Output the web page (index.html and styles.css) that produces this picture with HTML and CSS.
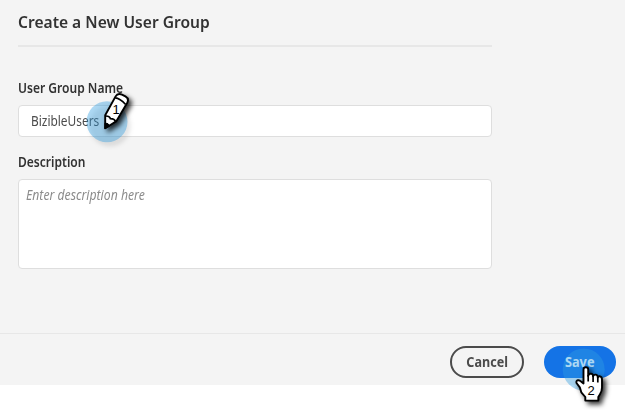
FILE: index.html
```html
<!DOCTYPE html>
<html lang="en">
<head>
<meta charset="utf-8">
<title>Create a New User Group</title>
<link rel="stylesheet" href="styles.css">
</head>
<body>
<main class="dialog">
  <form class="form">
    <h1 class="title"><span class="title-text">Create a New User Group</span></h1>
    <label class="label name-label" for="name"><span class="name-label-text">User Group Name</span></label>
    <div class="field" id="name"><span class="value">BizibleUsers</span></div>
    <label class="label desc-label" for="desc"><span class="desc-label-text">Description</span></label>
    <div class="field area" id="desc"><span class="placeholder">Enter description here</span></div>
  </form>
  <footer class="actions">
    <button class="button cancel" type="button"><span class="cancel-text">Cancel</span></button>
    <button class="button save" type="button"><span class="save-text">Save</span></button>
  </footer>
</main>
<svg class="marker pencil" width="70" height="65" viewBox="70 85 70 65">
  <circle class="halo" cx="107" cy="121.8" r="20.5"/>
  <g class="tool">
    <path class="shape" d="M105.2 128.2 L105.2 115.2 L115.6 96.4 Q117.6 92.8 122 94.6 L125.4 96.4 Q129.2 98.6 127.4 102.4 L116.2 121.4 Z"/>
    <path class="line" d="M115.2 97.8 Q120 98.2 125.4 104.2 M105.4 116 Q109.5 115.8 110.4 118.6 Q114.5 118.5 115.6 121.6"/>
    <path class="lead" d="M104.8 128.8 L105 123 Q108.7 123 109.8 126 Z"/>
  </g>
  <text class="number" x="116" y="114">1</text>
</svg>
<svg class="marker hand" width="65" height="70" viewBox="560 340 65 70">
  <circle class="halo" cx="583.7" cy="369.5" r="21"/>
  <g class="tool">
    <path class="shape" d="M583.5 383.5 V369.5 Q583.5 367.3 585.8 367.3 Q588.2 367.3 588.2 369.5 V376 Q588.5 373.6 590.8 373.6 Q593.1 373.8 593.1 376.3 Q593.6 374.4 595.8 374.6 Q597.8 375 597.8 377.4 Q598.4 376 600 376.3 Q602 376.8 602 379.5 V387.5 Q602 391 600 394.3 L598.3 397 V400.6 H585.3 V397 L581.3 392.3 L579.8 387.3 L576.5 383 Q575.8 380.8 578 380.2 Q579.7 380 581 381.5 Z"/>
    <path class="line" d="M588.2 375 V381.5 M593.1 376 V382 M597.8 377 V382.5"/>
  </g>
  <text class="number" x="591.2" y="395.2">2</text>
</svg>
</body>
</html>
```
FILE: styles.css
```css
* { box-sizing: border-box; }
body {
  margin: 0;
  background: #fff;
  color: #323232;
  font-family: "Noto Sans", "Open Sans", sans-serif;
  font-size: 14px;
  overflow: hidden;
}
.dialog {
  height: 385px;
  display: flex;
  flex-direction: column;
  background: #f4f4f4;
}
.form {
  height: 333px;
  width: 492px;
  padding-left: 18px;
}
.title {
  height: 47px;
  margin: 0;
  padding-top: 10px;
  border-bottom: 2px solid #e7e7e7;
  font-size: 16px;
  line-height: 24px;
  font-weight: 600;
}
.title-text, .name-label-text, .desc-label-text, .value, .placeholder, .cancel-text, .save-text {
  display: inline-block;
  white-space: nowrap;
  transform-origin: left center;
}
.title-text { transform: scaleX(.974); }
.label {
  display: block;
  height: 20px;
  font-weight: 600;
  line-height: 20px;
}
.name-label { margin: 31px 0 7px; }
.desc-label { margin: 15px 0 7px; }
.name-label-text, .desc-label-text { transform: scaleX(.86); }
.field {
  height: 32px;
  padding: 0 12px;
  border: 1px solid #dedede;
  border-radius: 4px;
  background: #fff;
  line-height: 29px;
}
.value { color: #4b4b4b; transform: scaleX(.85); }
.area { height: 90px; padding: 0 7px; }
.placeholder {
  color: #8c8c8c;
  font-style: italic;
  transform: scaleX(.872);
}
.actions {
  height: 52px;
  padding: 12px 9px 0 0;
  display: flex;
  justify-content: flex-end;
  gap: 20px;
  border-top: 1px solid #e7e7e7;
}
.button {
  height: 32px;
  padding: 0;
  border-radius: 16px;
  font: 700 14px/28px "Noto Sans", "Open Sans", sans-serif;
}
.cancel {
  width: 74px;
  border: 2px solid #4b4b4b;
  background: transparent;
  color: #4b4b4b;
}
.save {
  width: 72px;
  border: 0;
  background: #1473e6;
  color: #fff;
}
.cancel-text, .save-text { transform-origin: center; }
.cancel-text { transform: scaleX(.9); }
.save-text { transform: translateX(-.5px) scaleX(.91); }
.marker { position: absolute; pointer-events: none; }
.pencil { left: 70px; top: 85px; }
.hand { left: 560px; top: 340px; }
.halo { fill: #2f9de0; fill-opacity: .4; }
.pencil .halo { filter: drop-shadow(3px 4px 2px rgba(0, 0, 0, .25)); }
.tool { filter: drop-shadow(3px 3px 2.5px rgba(0, 0, 0, .8)); }
.shape { fill: #fff; stroke: #000; stroke-width: 1.9; stroke-linejoin: round; }
.line { fill: none; stroke: #000; stroke-width: 1.7; }
.lead { fill: #000; stroke: #000; }
.number {
  font: 13px "Liberation Sans", sans-serif;
  fill: #000;
  text-anchor: middle;
}
```
